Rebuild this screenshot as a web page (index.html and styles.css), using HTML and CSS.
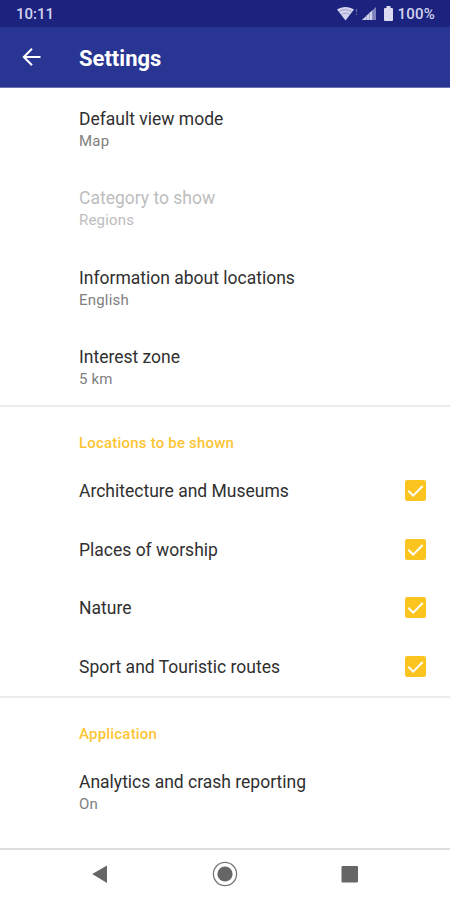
FILE: index.html
```html
<!DOCTYPE html>
<html lang="en">
<head>
  <meta charset="UTF-8">
  <meta name="viewport" content="width=device-width, initial-scale=1">
  <title>Settings</title>
  <link rel="stylesheet" href="styles.css">
</head>
<body>

  <div class="status-bar">
    <span class="clock">10:11</span>
    <div class="status-icons">
      <svg class="wifi" width="22" height="16" viewBox="0 0 22 16">
        <path d="M0 3.500C5 0 12 0 17 3.500L8.500 14.500Z" fill="#d3d3ee"/>
        <path d="M2.500 5.500c4-2.500 8-2.500 12 0M4.500 8.500c3-1.800 5-1.800 8 0" fill="none" stroke="#9293c4" stroke-width="0.800"/>
        <path d="M19.500 3v3M19.500 7.500v1.500" stroke="#6669ae" stroke-width="1.200"/>
      </svg>
      <svg class="signal" width="15" height="14" viewBox="0 0 15 14">
        <path d="M14 0v13H0Z" fill="#7f82bb"/>
        <path d="M10 3.700V13H0Z" fill="#d3d3ee"/>
        <path d="M4.500 8v5M7.500 5v8M10.500 3v10" stroke="#8f91c3" stroke-width="0.700"/>
      </svg>
      <svg class="battery" width="9" height="15" viewBox="0 0 9 15">
        <path d="M2.500 0h4v2H8q1 0 1 1v11q0 1-1 1H1q-1 0-1-1V3q0-1 1-1h1.500Z" fill="#dcdcf1"/>
      </svg>
      <span class="battery-level">100%</span>
    </div>
  </div>

  <header class="toolbar">
    <svg class="back" width="20" height="20" viewBox="0 0 20 20">
      <path d="M18.500 10H2M10 1.800L1.800 10l8.200 8.200" fill="none" stroke="#fff" stroke-width="2"/>
    </svg>
    <h1>Settings</h1>
  </header>

  <main>
    <section>
      <div class="item">
        <div class="title">Default view mode</div>
        <div class="summary">Map</div>
      </div>
      <div class="item disabled">
        <div class="title">Category to show</div>
        <div class="summary">Regions</div>
      </div>
      <div class="item">
        <div class="title">Information about locations</div>
        <div class="summary">English</div>
      </div>
      <div class="item">
        <div class="title">Interest zone</div>
        <div class="summary">5 km</div>
      </div>
    </section>

    <section class="locations">
      <h2>Locations to be shown</h2>
      <div class="check-item">
        <span class="title">Architecture and Museums</span>
        <svg class="checkbox" width="21" height="21" viewBox="0 0 21 21">
          <rect width="21" height="21" rx="2.300" fill="#fcc41f"/>
          <path d="M3.300 10.700l4.900 4.900L17.700 6" fill="none" stroke="#fff" stroke-width="2"/>
        </svg>
      </div>
      <div class="check-item">
        <span class="title">Places of worship</span>
        <svg class="checkbox" width="21" height="21" viewBox="0 0 21 21">
          <rect width="21" height="21" rx="2.300" fill="#fcc41f"/>
          <path d="M3.300 10.700l4.900 4.900L17.700 6" fill="none" stroke="#fff" stroke-width="2"/>
        </svg>
      </div>
      <div class="check-item">
        <span class="title">Nature</span>
        <svg class="checkbox" width="21" height="21" viewBox="0 0 21 21">
          <rect width="21" height="21" rx="2.300" fill="#fcc41f"/>
          <path d="M3.300 10.700l4.900 4.900L17.700 6" fill="none" stroke="#fff" stroke-width="2"/>
        </svg>
      </div>
      <div class="check-item">
        <span class="title">Sport and Touristic routes</span>
        <svg class="checkbox" width="21" height="21" viewBox="0 0 21 21">
          <rect width="21" height="21" rx="2.300" fill="#fcc41f"/>
          <path d="M3.300 10.700l4.900 4.900L17.700 6" fill="none" stroke="#fff" stroke-width="2"/>
        </svg>
      </div>
    </section>

    <section class="application">
      <h2>Application</h2>
      <div class="item">
        <div class="title">Analytics and crash reporting</div>
        <div class="summary">On</div>
      </div>
    </section>
  </main>

  <nav class="nav-bar">
    <svg width="26" height="26" viewBox="0 0 26 26">
      <path d="M5.200 13L20 4.500v17.500Z" fill="#666"/>
    </svg>
    <svg width="26" height="26" viewBox="0 0 26 26">
      <circle cx="13" cy="13" r="11.600" fill="none" stroke="#777" stroke-width="1.300"/>
      <circle cx="13" cy="13" r="7.600" fill="#666"/>
    </svg>
    <svg width="26" height="26" viewBox="0 0 26 26">
      <rect x="4.500" y="5" width="16.500" height="16.500" rx="1" fill="#666"/>
    </svg>
  </nav>

</body>
</html>
```
FILE: styles.css
```css
body {
  margin: 0;
  height: 900px;
  display: flex;
  flex-direction: column;
  font-family: Roboto, "Liberation Sans", sans-serif;
  background-color: #fff;
  color: #303030;
  overflow: hidden;
}

h1, h2 {
  margin: 0;
}

/* Status bar */
.status-bar {
  height: 27px;
  box-sizing: border-box;
  padding: 0 15px 0 16px;
  display: flex;
  align-items: center;
  justify-content: space-between;
  background-color: #1b237e;
  color: #d3d3ee;
  font-size: 15px;
  font-weight: 500;
}

.status-icons {
  display: flex;
  align-items: center;
}

.signal {
  margin-left: 3px;
}

.battery {
  margin: 0 5px 0 7px;
}

.battery-level {
  letter-spacing: 0.2px;
}

/* Toolbar */
.toolbar {
  height: 61px;
  box-sizing: border-box;
  padding-left: 22px;
  display: flex;
  align-items: center;
  background-color: #283593;
  border-bottom: 1px solid #6b73b3;
}

.toolbar h1 {
  margin-left: 37px;
  padding-top: 2px;
  color: #fff;
  font-size: 22px;
  font-weight: 700;
}

/* Preferences */
main {
  flex: 1;
}

.item {
  height: 79.25px;
  box-sizing: border-box;
  padding: 20px 24px 0 79px;
}

.title {
  font-size: 17.5px;
  line-height: 22px;
}

.summary {
  font-size: 15px;
  line-height: 22px;
  letter-spacing: 0.2px;
  color: #808080;
}

.disabled .title,
.disabled .summary {
  color: #bdbdbd;
}

.locations,
.application {
  border-top: 2px solid #ebebeb;
}

h2 {
  height: 54px;
  box-sizing: border-box;
  padding: 26px 0 0 79px;
  color: #fcc536;
  font-size: 15px;
  line-height: 20px;
  font-weight: 500;
  letter-spacing: 0.2px;
}

.application h2 {
  height: 53.5px;
}

.check-item {
  height: 58.7px;
  box-sizing: border-box;
  padding: 0 24px 0 79px;
  display: flex;
  align-items: center;
  justify-content: space-between;
}

.check-item .title {
  padding-top: 1px;
}

/* Navigation bar */
.nav-bar {
  height: 52px;
  box-sizing: border-box;
  padding: 0 87px 2px;
  display: flex;
  align-items: center;
  justify-content: space-between;
  border-top: 2px solid #dedede;
}
```
